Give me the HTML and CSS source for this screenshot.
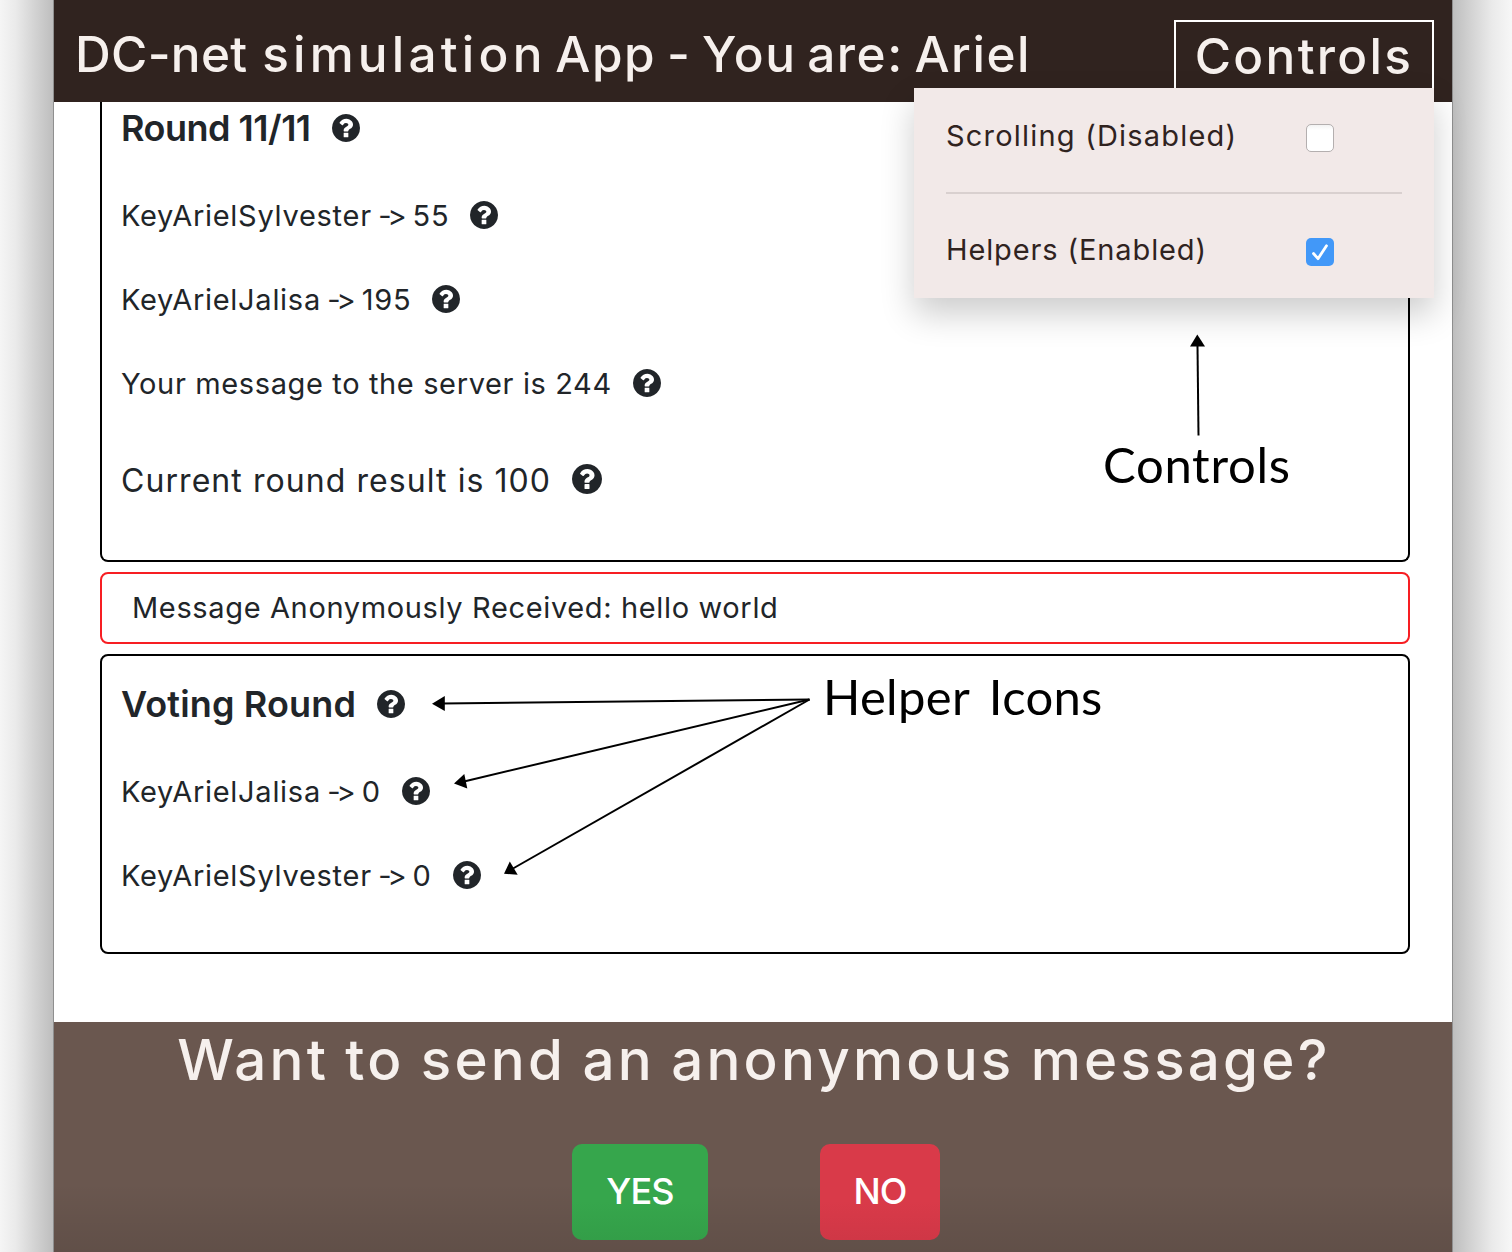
FILE: index.html
```html
<!DOCTYPE html>
<html lang="en">
<head>
<meta charset="utf-8">
<title>DC-net simulation App</title>
<link rel="stylesheet" href="styles.css">
</head>
<body>
<svg class="defs" width="0" height="0" aria-hidden="true">
  <symbol id="help" viewBox="128 128 1536 1536"><path d="M1024 1376v-192q0-14-9-23t-23-9h-192q-14 0-23 9t-9 23v192q0 14 9 23t23 9h192q14 0 23-9t9-23zm256-672q0-88-55.5-163t-138.5-116-170-41q-243 0-371 213-15 24 8 42l132 100q7 6 19 6 16 0 25-12 53-68 86-92 34-24 86-24 48 0 85.5 26t37.5 59q0 38-20 61t-68 45q-63 28-115.5 86.5t-52.5 125.5v36q0 14 9 23t23 9h192q14 0 23-9t9-23q0-19 21.5-49.5t54.5-49.5q32-18 49-28.5t46-35 44.5-48 28-60.5 12.5-81zm384 192q0 209-103 385.5t-279.5 279.5-385.5 103-385.5-103-279.5-279.5-103-385.5 103-385.5 279.5-279.5 385.5-103 385.5 103 279.5 279.5 103 385.5z"/></symbol>
</svg>
<div class="desktop">
  <div class="shade shade-left"></div>
  <div class="window">
    <header class="topbar">
      <h1 class="title"><span class="tight">DC-net</span> <span class="wide">simulation</span> App - You are: Ariel</h1>
      <div class="controls">
        <button class="controls-button">Controls</button>
        <div class="menu">
          <label class="menu-item"><span class="menu-label scrolling">Scrolling (Disabled)</span><span class="check"></span></label>
          <div class="divider"></div>
          <label class="menu-item"><span class="menu-label helpers">Helpers (Enabled)</span><span class="check checked"><svg viewBox="0 0 28 28"><path d="M7.5 15.5l4.500 5.200L20.500 7.800"/></svg></span></label>
        </div>
      </div>
    </header>
    <main class="content">
      <section class="box round-box">
        <h2 class="heading"><span class="round-name">Round 11/11</span><svg class="help"><use href="#help"/></svg></h2>
        <p class="row"><span class="key">KeyArielSylvester <span class="arrow">-&gt;</span> 55</span><svg class="help"><use href="#help"/></svg></p>
        <p class="row"><span class="key">KeyArielJalisa <span class="arrow">-&gt;</span> 195</span><svg class="help"><use href="#help"/></svg></p>
        <p class="row"><span class="server">Your message to the server is 244</span><svg class="help"><use href="#help"/></svg></p>
        <p class="row result"><span>Current round result is 100</span><svg class="help"><use href="#help"/></svg></p>
      </section>
      <section class="box received"><p>Message Anonymously Received: hello world</p></section>
      <section class="box voting-box">
        <h2 class="heading"><span class="voting-name">Voting Round</span><svg class="help"><use href="#help"/></svg></h2>
        <p class="row"><span class="key">KeyArielJalisa <span class="arrow">-&gt;</span> 0</span><svg class="help"><use href="#help"/></svg></p>
        <p class="row"><span class="key">KeyArielSylvester <span class="arrow">-&gt;</span> 0</span><svg class="help"><use href="#help"/></svg></p>
      </section>
    </main>
    <footer class="prompt">
      <h2 class="question">Want to send an anonymous message?</h2>
      <div class="answers">
        <button class="answer yes">YES</button>
        <button class="answer no">NO</button>
      </div>
    </footer>
  </div>
  <div class="shade shade-right"></div>
</div>
<svg class="arrows" viewBox="0 0 1512 1252">
  <g class="shaft">
    <path d="M1197.500 346L1198.500 435.500"/>
    <path d="M442 703.500L809.500 699.500"/>
    <path d="M464 781.500L809.500 699.500"/>
    <path d="M513 868.500L809.500 699.500"/>
  </g>
  <path d="M1197.300 334.500l7.700 12h-15z"/>
  <path d="M432 703.800l12.800-7.800v15z"/>
  <path d="M454 783.500l10.300-9.500 3 14.500z"/>
  <path d="M504 873.800l5.800-12.300 7.900 13.300z"/>
</svg>
<div class="note note-controls">Controls</div>
<div class="note note-helpers">Helper Icons</div>
</body>
</html>
```
FILE: styles.css
```css
* { box-sizing: border-box; }
body {
  margin: 0;
  width: 1512px;
  height: 1252px;
  overflow: hidden;
  position: relative;
  background: #fff;
  color: #212529;
  font-family: Inter, "Liberation Sans", sans-serif;
  font-variant-ligatures: none;
  font-feature-settings: "calt" 0;
}
h1, h2, p { margin: 0; font-weight: 400; white-space: nowrap; }
button { font-family: inherit; border: 0; padding: 0; white-space: nowrap; }
.defs { position: absolute; }

.desktop { display: flex; height: 1252px; }
.shade-left {
  width: 54px;
  border-right: 1px solid #8f8f8f;
  background: linear-gradient(to left, #bebebe, #d5d5d5 38%, #eaeaea 70%, #f5f5f5);
}
.shade-right {
  flex: 1;
  border-left: 1px solid #8f8f8f;
  background: linear-gradient(to right, #bebebe, #d5d5d5 34%, #eaeaea 66%, #f7f7f7);
}
.window { width: 1398px; display: flex; flex-direction: column; background: #fff; }

.topbar {
  height: 102px;
  flex: none;
  display: flex;
  justify-content: space-between;
  padding: 20px 18px 0 21px;
  background: #30231f;
  color: #f6f0ed;
}
.title { font-size: 49.5px; font-weight: 500; line-height: 68px; letter-spacing: 1.53px; word-spacing: -4px; }
.tight { letter-spacing: .3px; margin-right: 4px; }
.wide { letter-spacing: 4.2px; margin-right: -2px; }
.controls { position: relative; width: 260px; }
.controls-button {
  width: 260px;
  height: 70px;
  border: 2px solid #fff;
  background: none;
  color: inherit;
  font-size: 49.5px;
  font-weight: 500;
  line-height: 66px;
  letter-spacing: 2.3px;
  padding: 1px 0 0 0;
}
.menu {
  position: absolute;
  right: 0;
  top: 68px;
  width: 520px;
  height: 210px;
  z-index: 2;
  padding: 0 32px;
  background: #f2e9e8;
  color: #30231f;
  box-shadow: 0 16px 32px rgba(0, 0, 0, .2);
}
.menu-item { display: flex; justify-content: space-between; height: 104px; padding: 36px 68px 0 0; }
.menu-item + .divider + .menu-item { height: 104px; padding-top: 44px; }
.menu-label { font-size: 29px; line-height: 24px; white-space: nowrap; }
.scrolling { letter-spacing: 1.2px; }
.helpers { letter-spacing: .88px; }
.divider { height: 2px; background: #d9d0cf; }
.check {
  width: 28px;
  height: 28px;
  border: 1.500px solid #b4afaf;
  border-radius: 5px;
  background: linear-gradient(#f3f3f3, #fff 20%);
}
.check.checked { border: 0; background: #4298f8; }
.check svg { display: block; fill: none; stroke: #fff; stroke-width: 2.8; stroke-linecap: round; stroke-linejoin: round; }

.content { flex: 1; display: flex; flex-direction: column; gap: 10px; padding: 0 42px 0 46px; }
.box { border: 2px solid #000; border-radius: 8px; padding-left: 19px; }
.round-box { height: 460px; border-top: 0; border-top-left-radius: 0; border-top-right-radius: 0; }
.heading, .row { display: flex; align-items: center; }
.heading { height: 52px; margin-bottom: 19px; font-size: 36px; font-weight: 600; }
.round-name { letter-spacing: -.5px; }
.voting-name { letter-spacing: .15px; }
.row { height: 84px; font-size: 29px; }
.key { letter-spacing: .72px; word-spacing: -2.5px; }
.arrow { letter-spacing: -4px; margin-right: 3.5px; }
.server { letter-spacing: .63px; }
.help { width: 28px; height: 28px; margin-left: 21px; fill: #212529; }
.row.result { margin-top: 13px; font-size: 32px; letter-spacing: 1.07px; }
.result .help { width: 30px; height: 30px; margin-bottom: 2px; }
.received { height: 72px; border-color: #f71e23; padding-left: 30px; }
.received p { font-size: 29px; line-height: 68px; letter-spacing: .64px; }
.voting-box { height: 300px; padding-top: 22px; }

.prompt {
  height: 230px;
  flex: none;
  background: linear-gradient(transparent 70%, rgba(0, 0, 0, .09)), #6a574f;
  text-align: center;
}
.question { color: #f6f0ed; font-size: 56.500px; font-weight: 500; line-height: 76px; letter-spacing: 3.2px; word-spacing: -2px; padding-left: 2px; }
.answers { display: flex; justify-content: center; gap: 112px; padding: 46px 0 0 6px; }
.answer { height: 96px; border-radius: 10px; color: #fff; font-size: 36px; font-weight: 500; letter-spacing: -.8px; padding-bottom: 2px; }
.yes { width: 136px; background: linear-gradient(#36a64c 60%, #339e48); }
.no { width: 120px; background: linear-gradient(#d93a49 60%, #cf3746); }

.arrows { position: absolute; left: 0; top: 0; width: 1512px; height: 1252px; pointer-events: none; z-index: 3; }
.shaft { stroke: #000; stroke-width: 2; }
.note {
  position: absolute;
  z-index: 3;
  color: #000;
  font: 49px/60px Lato, "Liberation Sans", sans-serif;
  white-space: nowrap;
}
.note-controls { left: 1103px; top: 434px; letter-spacing: .7px; }
.note-helpers { left: 823px; top: 666px; letter-spacing: .3px; word-spacing: 7px; }
```
